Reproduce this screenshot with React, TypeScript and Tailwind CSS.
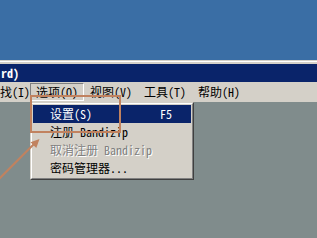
import React from 'react';

const FONT = "font-['Noto_Sans_Mono_CJK_SC','Noto_Sans_CJK_SC',monospace]";

function MenuItem(props: { label: string; shortcut?: string; active?: boolean; disabled?: boolean }) {
  let color = 'text-black';
  if (props.active) color = 'bg-[#0a246a] text-white';
  if (props.disabled) color = 'text-[#808080] [text-shadow:1px_1px_0_#ffffff]';

  return (
    <div className={`h-[18px] flex items-center justify-between pl-[17px] pr-[19px] whitespace-pre ${color}`}>
      <span>{props.label}</span>
      {props.shortcut && <span>{props.shortcut}</span>}
    </div>
  );
}

export default function App() {
  return (
    <div className={`relative w-[317px] h-[238px] overflow-hidden bg-[#3a6ea5] flex flex-col text-[12px] leading-none ${FONT}`}>
      {/* Desktop */}
      <div className="h-[60px] shrink-0" />

      {/* Window */}
      <div className="flex-1 flex flex-col bg-[#d4d0c8]">
        <div className="h-px bg-[#d4d0c8]" />
        <div className="h-px bg-white" />
        <div className="h-[2px] bg-[#d4d0c8]" />

        {/* Title bar */}
        <div className="h-[18px] bg-[#0a246a] text-white font-bold flex items-center whitespace-pre">
          <span className="ml-px">rd)</span>
        </div>

        {/* Menu bar */}
        <div className="h-[20px] flex items-center whitespace-pre">
          <span>找(I)</span>
          <span className="h-[18px] flex items-center px-[5px] border border-t-[#808080] border-l-[#808080] border-b-white border-r-white">
            选项(O)
          </span>
          <span className="px-[6px]">视图(V)</span>
          <span className="px-[6px]">工具(T)</span>
          <span className="px-[6px]">帮助(H)</span>
        </div>

        {/* Client area */}
        <div className="flex-1 bg-[#808c8c]" />
      </div>

      {/* Dropdown menu */}
      <div className="absolute left-[30px] top-[102px] w-[164px] h-[78px] border border-t-[#d4d0c8] border-l-[#d4d0c8] border-b-[#404040] border-r-[#404040] bg-[#d4d0c8]">
        <div className="h-full border border-t-white border-l-white border-b-[#808080] border-r-[#808080] p-px">
          <MenuItem label="设置(S)" shortcut="F5" active />
          <MenuItem label="注册 Bandizip" />
          <MenuItem label="取消注册 Bandizip" disabled />
          <MenuItem label="密码管理器..." />
        </div>
      </div>

      {/* Annotation */}
      <svg className="absolute inset-0 pointer-events-none" width="317" height="238" viewBox="0 0 317 238">
        <rect x="31" y="96" width="89" height="36" fill="none" stroke="#c1825f" strokeWidth="2" />
        <line x1="-2" y1="180" x2="35" y2="143" stroke="#c1825f" strokeWidth="2" />
        <polygon points="39.5,139 36.3,148 30.5,142.2" fill="#c1825f" />
      </svg>
    </div>
  );
}
